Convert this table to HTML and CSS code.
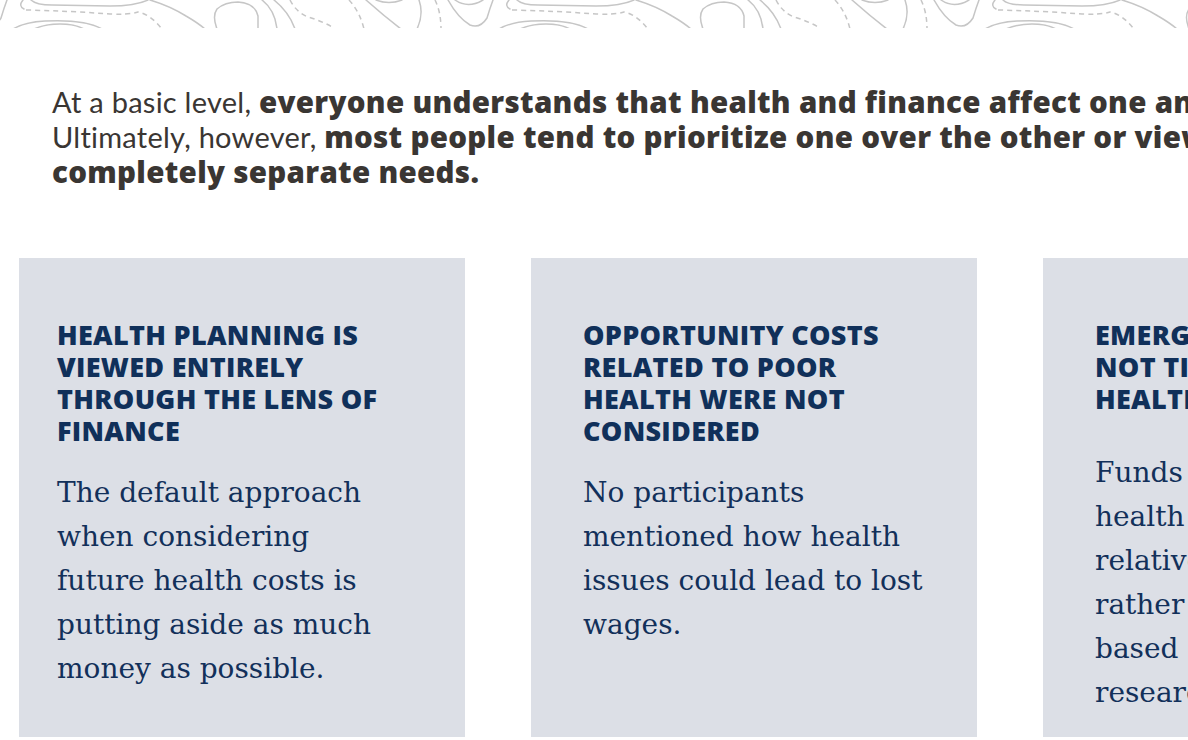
FILE: index.html
```html
<!DOCTYPE html>
<html lang="en">
<head>
<meta charset="utf-8">
<title>Health and finance</title>
<link rel="stylesheet" href="styles.css">
</head>
<body>
<div class="topo">
  <svg width="1188" height="28" viewBox="0 0 1188 28" xmlns="http://www.w3.org/2000/svg">
    <defs>
      <g id="tile" class="topo-lines">
        <path d="M23,0 Q18,6 24,9"/>
        <path class="dash" d="M26,10 Q70,11 110,14 Q128,15 138,12 Q150,14 162,29"/>
        <path d="M31,0 Q36,5 52,5 L110,6 Q135,6 148,0"/>
        <path d="M150,0 Q170,6 186,16 Q198,23 205,29"/>
        <path d="M13,29 Q25,22 45,21 Q85,19 102,29"/>
        <path d="M34,29 Q45,24 60,24 Q75,24 84,29"/>
        <path d="M217,29 Q212,16 217,9 Q225,2 238,2 Q255,3 258,16 L258,29"/>
        <path d="M262,0 Q275,10 277,29"/>
        <path d="M274,0 Q289,12 295,29"/>
        <path class="dash" d="M290,0 Q296,12 308,17 Q322,21 334,28"/>
        <path class="dash" d="M349,0 Q360,12 364,29"/>
        <path d="M366,0 Q384,16 401,29"/>
        <path d="M376,0 Q389,5 402,0"/>
        <path d="M419,0 Q424,14 417,29"/>
        <path class="dash" d="M435,0 Q441,12 441,29"/>
        <path d="M448,0 Q458,18 470,25 Q480,29 487,18 Q490,8 493,0"/>
        <path d="M455,0 Q468,9 483,0"/>
      </g>
    </defs>
    <use href="#tile" x="-486"/>
    <use href="#tile" x="0"/>
    <use href="#tile" x="486"/>
    <use href="#tile" x="972"/>
  </svg>
</div>

<main class="page">
  <p class="intro">At a basic level, <b>everyone understands that health and finance affect one another.</b><br>Ultimately, however, <b>most people tend to prioritize one over the other or view them as</b><br><b>completely separate needs.</b></p>

  <section class="cards">
    <article class="card card--first">
      <h2 class="card-title">HEALTH PLANNING IS VIEWED ENTIRELY THROUGH THE LENS OF FINANCE</h2>
      <p class="card-text">The default approach when considering future health costs is putting aside as much money as possible.</p>
    </article>
    <article class="card">
      <h2 class="card-title">OPPORTUNITY COSTS RELATED TO POOR HEALTH WERE NOT CONSIDERED</h2>
      <p class="card-text">No participants mentioned how health issues could lead to lost wages.</p>
    </article>
    <article class="card card--short">
      <h2 class="card-title">EMERGENCY SAVINGS NOT TIED TO ACTUAL HEALTH NEEDS</h2>
      <p class="card-text">Funds set aside for health emergencies are relatively arbitrary rather than calculated based on actual cost research.</p>
    </article>
  </section>
</main>
</body>
</html>
```

FILE: styles.css
```css
html, body {
  margin: 0;
  padding: 0;
  background: #ffffff;
}

body {
  width: 1188px;
  height: 740px;
  overflow: hidden;
}

.topo {
  height: 28px;
  overflow: hidden;
}

.topo svg {
  display: block;
}

.topo-lines path {
  fill: none;
  stroke: #c6c6c6;
  stroke-width: 1.5;
  stroke-linecap: round;
}

.topo-lines path.dash {
  stroke-dasharray: 5 4;
  stroke-linecap: butt;
}

.page {
  width: 1600px;
}

.intro {
  margin: 0;
  padding: 56px 0 0 52px;
  font-family: "Lato", "Liberation Sans", sans-serif;
  font-size: 29px;
  line-height: 35px;
  font-weight: 400;
  letter-spacing: 0.25px;
  color: #3a3633;
  white-space: nowrap;
}

.intro b {
  font-family: "Open Sans", "Liberation Sans", sans-serif;
  font-weight: 800;
  font-size: 29.5px;
  line-height: 1;
  letter-spacing: 0.3px;
}

.cards {
  display: flex;
  gap: 66px;
  padding-left: 19px;
  margin-top: 69px;
}

.card {
  flex: 0 0 446px;
  height: 479px;
  box-sizing: border-box;
  background: #dcdfe6;
  padding: 61px 52px 0 52px;
}

.card--first {
  padding-left: 38px;
  padding-right: 66px;
}

.card-title {
  margin: 0;
  font-family: "Open Sans", "Liberation Sans", sans-serif;
  font-weight: 800;
  font-size: 27px;
  line-height: 32px;
  letter-spacing: 0.3px;
  color: #10305a;
}

.card-text {
  margin: 24px 0 0;
  font-family: "DejaVu Serif", "Liberation Serif", serif;
  font-size: 28px;
  line-height: 44px;
  color: #12305a;
}

.card--short .card-text {
  margin-top: 36px;
}
```
